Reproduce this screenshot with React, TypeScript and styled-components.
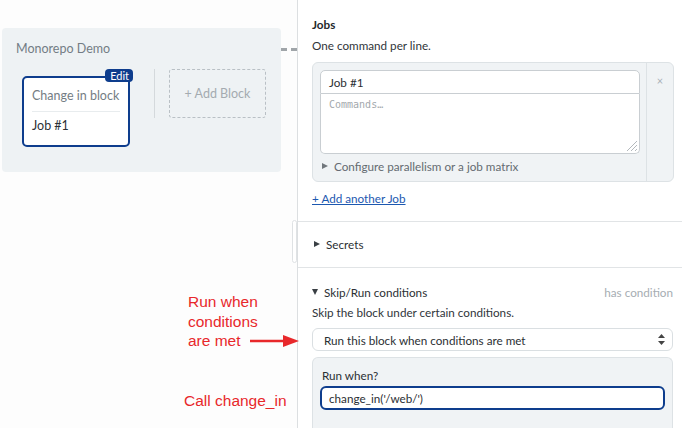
import React from "react";
import styled, { createGlobalStyle } from "styled-components";

const Global = createGlobalStyle`
  html, body { margin: 0; padding: 0; background: #fff; }
  body { font-family: Lato, "Noto Sans", sans-serif; color: #2b2f33; }
  * { box-sizing: border-box; }
`;

const Page = styled.div`
  position: relative;
  display: flex;
  width: 682px;
  height: 428px;
  overflow: hidden;
  background: #fdfdfd;
`;

const Canvas = styled.div`
  position: relative;
  width: 297px;
  flex: none;
  display: flex;
  align-items: flex-start;
  padding: 28px 0 0 2px;
`;

const Pipeline = styled.div`
  width: 279px;
  height: 144px;
  background: #eef2f4;
  border-radius: 4px;
  padding: 13px 14px 0 14px;
`;

const PipelineName = styled.div`
  font-size: 12.5px;
  color: #737d85;
  line-height: 16px;
  margin-bottom: 12px;
`;

const BlocksRow = styled.div`
  display: flex;
  align-items: flex-start;
  padding-left: 6px;
`;

const Block = styled.div`
  position: relative;
  width: 108px;
  height: 71px;
  margin-top: 7px;
  background: #fff;
  border: 2px solid #0e3d8d;
  border-radius: 5px;
  padding: 0 8px;
`;

const EditBadge = styled.span`
  position: absolute;
  top: -9px;
  right: -5px;
  background: #0e3d8d;
  color: #fff;
  font-size: 11px;
  line-height: 13px;
  padding: 0 4px 0 5px;
  border-radius: 4px;
`;

const BlockTitle = styled.div`
  font-size: 12.5px;
  color: #747d84;
  line-height: 16px;
  padding: 10px 0 7px;
  border-bottom: 1px solid #e8ecee;
`;

const BlockJob = styled.div`
  font-size: 12.5px;
  color: #2d3135;
  line-height: 16px;
  padding-top: 6px;
`;

const Separator = styled.div`
  width: 1px;
  height: 49px;
  background: #d4d9dc;
  margin: 0 14px 0 24px;
`;

const AddBlock = styled.div`
  width: 97px;
  height: 49px;
  border: 1.5px dashed #b9c0c5;
  border-radius: 3px;
  display: flex;
  align-items: center;
  justify-content: center;
  font-size: 12.5px;
  color: #a4abb0;
`;

const Connector = styled.div`
  width: 16px;
  margin-top: 20px;
  border-top: 3px dashed #a0a5a9;
`;

const Note = styled.div<{ $top: number; $left: number }>`
  position: absolute;
  top: ${(p) => p.$top}px;
  left: ${(p) => p.$left}px;
  font-family: "Liberation Sans", Arial, sans-serif;
  font-size: 15.5px;
  line-height: 19.5px;
  color: #e8282b;
`;

const Arrow = styled.svg`
  position: absolute;
  left: 249px;
  top: 334px;
`;

const Panel = styled.div`
  flex: 1;
  border-left: 1px solid #dcdfe1;
  background: #fff;
  display: flex;
  flex-direction: column;
  font-size: 11.7px;
`;

const Section = styled.div<{ $pad: string; $last?: boolean }>`
  padding: ${(p) => p.$pad};
  border-bottom: ${(p) => (p.$last ? "none" : "1px solid #e1e4e6")};
`;

const Heading = styled.div`
  font-size: 11.7px;
  font-weight: 700;
  line-height: 16px;
  color: #23272b;
`;

const Help = styled.div<{ $mt: number }>`
  margin-top: ${(p) => p.$mt}px;
  line-height: 16px;
  color: #30353a;
`;

const JobBox = styled.div`
  display: flex;
  margin-top: 9px;
  background: #f0f3f5;
  border: 1px solid #dde2e5;
  border-radius: 6px;
  height: 120px;
`;

const JobMain = styled.div`
  flex: 1;
  padding: 7px 6px 0 7px;
  border-right: 1px solid #dde2e5;
`;

const JobSide = styled.div`
  width: 26px;
  display: flex;
  justify-content: center;
  padding-top: 11px;
  color: #a9b0b5;
  font-size: 11px;
  line-height: 14px;
`;

const JobInput = styled.div`
  height: 24px;
  background: #fff;
  border: 1px solid #c9ced2;
  border-radius: 5px 5px 0 0;
  padding: 0 8px;
  line-height: 22px;
  color: #2b2f33;
`;

const Commands = styled.div`
  position: relative;
  height: 60px;
  background: #fff;
  border: 1px solid #c9ced2;
  border-top: none;
  border-radius: 0 0 5px 5px;
  padding: 4px 8px;
  font-family: "DejaVu Sans Mono", monospace;
  font-size: 10px;
  line-height: 14px;
  color: #a3a9ad;
`;

const Grip = styled.svg`
  position: absolute;
  right: 1px;
  bottom: 1px;
`;

const Disclosure = styled.div<{ $color?: string }>`
  display: flex;
  align-items: center;
  gap: 6px;
  line-height: 16px;
  color: ${(p) => p.$color ?? "#2b2f33"};
`;

const Tri = styled.span<{ $open?: boolean; $color?: string }>`
  width: 0;
  height: 0;
  ${(p) =>
    p.$open
      ? `border-left: 3.5px solid transparent; border-right: 3.5px solid transparent; border-top: 6px solid ${p.$color ?? "#3a3f44"};`
      : `border-top: 3.5px solid transparent; border-bottom: 3.5px solid transparent; border-left: 6px solid ${p.$color ?? "#3a3f44"};`}
`;

const ConfigRow = styled.div`
  padding: 4px 0 0 2px;
`;

const AddLink = styled.a`
  display: inline-block;
  margin-top: 8px;
  line-height: 16px;
  color: #1c58b0;
  text-decoration: underline;
`;

const RowBetween = styled.div`
  display: flex;
  justify-content: space-between;
  align-items: center;
`;

const Muted = styled.span`
  color: #a6adb2;
`;

const Select = styled.div`
  margin-top: 8px;
  height: 23px;
  border: 1px solid #dadfe2;
  border-radius: 6px;
  display: flex;
  align-items: center;
  justify-content: space-between;
  padding: 0 7px 0 11px;
  color: #2b2f33;
  background: #fff;
`;

const CondBox = styled.div`
  margin-top: 6px;
  background: #f0f3f5;
  border: 1px solid #dde2e5;
  border-bottom: none;
  border-radius: 6px 6px 0 0;
  padding: 9px 7px 20px 7px;
`;

const Label = styled.div`
  line-height: 16px;
  color: #2b2f33;
  padding-left: 2px;
`;

const CondInput = styled.div`
  margin-top: 3px;
  height: 24px;
  background: #fff;
  border: 2px solid #0e3d8d;
  border-radius: 6px;
  padding: 0 7px;
  line-height: 20px;
  color: #2b2f33;
`;

const ScrollHandle = styled.div`
  position: absolute;
  left: 292px;
  top: 220px;
  width: 5px;
  height: 43px;
  border: 1px solid #dfe2e4;
  border-radius: 3px;
  background: #fff;
`;

export default function App() {
  return (
    <Page>
      <Global />
      <Canvas>
        <Pipeline>
          <PipelineName>Monorepo Demo</PipelineName>
          <BlocksRow>
            <Block>
              <EditBadge>Edit</EditBadge>
              <BlockTitle>Change in block</BlockTitle>
              <BlockJob>Job #1</BlockJob>
            </Block>
            <Separator />
            <AddBlock>+ Add Block</AddBlock>
          </BlocksRow>
        </Pipeline>
        <Connector />
        <Note $top={292} $left={188}>
          Run when
          <br />
          conditions
          <br />
          are met
        </Note>
        <Note $top={391} $left={184}>Call change_in</Note>
        <Arrow width="50" height="14" viewBox="0 0 50 14">
          <line x1="1" y1="7" x2="38" y2="7" stroke="#e8282b" strokeWidth="2.5" />
          <polygon points="34,1 50,7 34,13" fill="#e8282b" />
        </Arrow>
      </Canvas>
      <ScrollHandle />
      <Panel>
        <Section $pad="16px 8px 15px 14px">
          <Heading>Jobs</Heading>
          <Help $mt={5}>One command per line.</Help>
          <JobBox>
            <JobMain>
              <JobInput>Job #1</JobInput>
              <Commands>
                Commands…
                <Grip width="13" height="13" viewBox="0 0 13 13">
                  <path d="M12 2 L2 12 M12 6 L6 12 M12 10 L10 12" stroke="#b3b8bc" strokeWidth="1" />
                </Grip>
              </Commands>
              <ConfigRow>
                <Disclosure $color="#646b71">
                  <Tri $color="#71777c" />
                  Configure parallelism or a job matrix
                </Disclosure>
              </ConfigRow>
            </JobMain>
            <JobSide>×</JobSide>
          </JobBox>
          <AddLink>+ Add another Job</AddLink>
        </Section>
        <Section $pad="14px 8px 15px 16px">
          <Disclosure>
            <Tri />
            Secrets
          </Disclosure>
        </Section>
        <Section $pad="16px 9px 0 14px" $last>
          <RowBetween>
            <Disclosure>
              <Tri $open />
              Skip/Run conditions
            </Disclosure>
            <Muted>has condition</Muted>
          </RowBetween>
          <Help $mt={4}>Skip the block under certain conditions.</Help>
          <Select>
            Run this block when conditions are met
            <svg width="7" height="11" viewBox="0 0 7 11">
              <polygon points="3.5,0 7,4 0,4" fill="#444" />
              <polygon points="0,7 7,7 3.5,11" fill="#444" />
            </svg>
          </Select>
          <CondBox>
            <Label>Run when?</Label>
            <CondInput>change_in('/web/')</CondInput>
          </CondBox>
        </Section>
      </Panel>
    </Page>
  );
}
